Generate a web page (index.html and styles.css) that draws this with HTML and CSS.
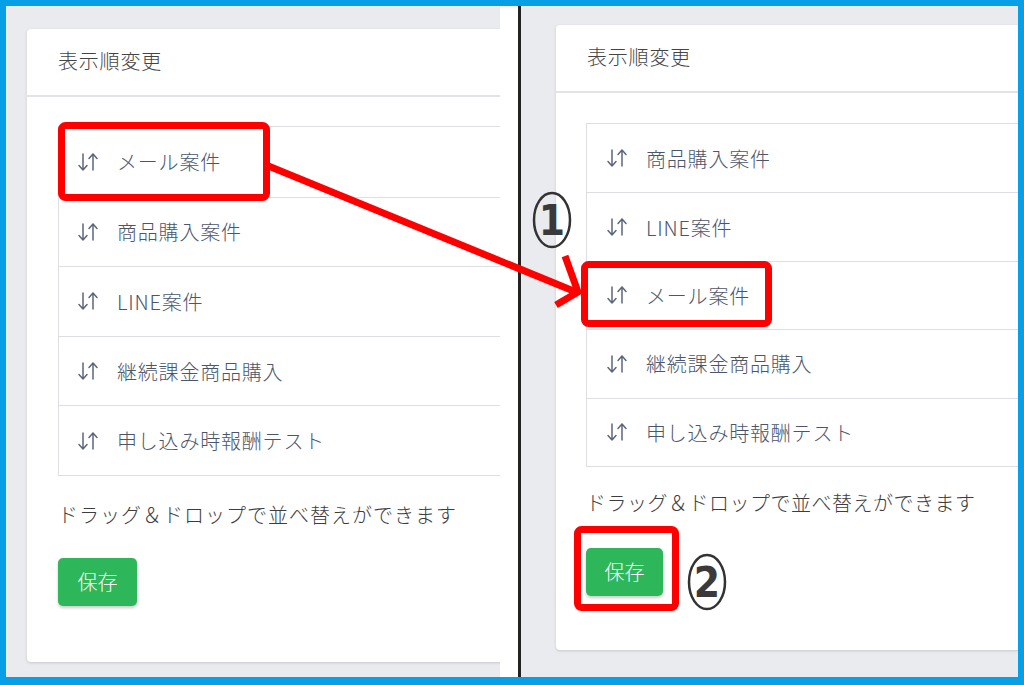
FILE: index.html
```html
<!DOCTYPE html>
<html lang="ja">
<head>
    <meta charset="UTF-8">
    <meta name="viewport" content="width=device-width, initial-scale=1.0">
    <title>表示順変更</title>
    <link rel="stylesheet" href="styles.css">
</head>
<body>
    <div class="page">
        <div class="frame">
            <div class="shot shot-left">
                <div class="card">
                    <div class="card-header">表示順変更</div>
                    <div class="card-body">
                        <ul class="sort-list">
                            <li><span class="sort-icon"></span>メール案件</li>
                            <li><span class="sort-icon"></span>商品購入案件</li>
                            <li><span class="sort-icon"></span>LINE案件</li>
                            <li><span class="sort-icon"></span>継続課金商品購入</li>
                            <li><span class="sort-icon"></span>申し込み時報酬テスト</li>
                        </ul>
                        <p class="hint">ドラッグ＆ドロップで並べ替えができます</p>
                        <button class="btn-save">保存</button>
                    </div>
                </div>
            </div>
            <div class="gap"></div>
            <div class="divider"></div>
            <div class="shot shot-right">
                <div class="card">
                    <div class="card-header">表示順変更</div>
                    <div class="card-body">
                        <ul class="sort-list">
                            <li><span class="sort-icon"></span>商品購入案件</li>
                            <li><span class="sort-icon"></span>LINE案件</li>
                            <li><span class="sort-icon"></span>メール案件</li>
                            <li><span class="sort-icon"></span>継続課金商品購入</li>
                            <li><span class="sort-icon"></span>申し込み時報酬テスト</li>
                        </ul>
                        <p class="hint">ドラッグ＆ドロップで並べ替えができます</p>
                        <button class="btn-save">保存</button>
                    </div>
                </div>
            </div>
        </div>

        <!-- 注釈（赤枠・矢印・番号） -->
        <svg class="annot" width="1024" height="685" viewBox="0 0 1024 685">
            <g fill="none" stroke="#ff0000" stroke-width="7">
                <rect x="61.5" y="125.5" width="205" height="72" rx="4"/>
                <rect x="584.5" y="264.5" width="184" height="59" rx="4"/>
                <rect x="577.5" y="529.5" width="98" height="78" rx="4"/>
                <line x1="266" y1="165" x2="576" y2="292"/>
                <polyline points="565,256 578,292 556,305"/>
            </g>
            <g class="num">
                <ellipse cx="552" cy="220" rx="18" ry="27"/>
                <text x="552" y="235">1</text>
                <ellipse cx="707" cy="582" rx="18" ry="27"/>
                <text x="707" y="597">2</text>
            </g>
        </svg>
    </div>

    <script>
        // 並べ替えアイコン（↓↑）を各行に入れる
        const iconSvg = '<svg width="22" height="20" viewBox="0 0 22 20" fill="none" stroke="currentColor" stroke-width="1.5" stroke-linecap="round" stroke-linejoin="round">' +
            '<path d="M6 2v16M2 13.5l4 4.5 4-4.5"/>' +
            '<path d="M16 18V2M12 6.5l4-4.5 4 4.5"/></svg>';
        document.querySelectorAll('.sort-icon').forEach((el) => {
            el.innerHTML = iconSvg;
        });
    </script>
</body>
</html>
```

FILE: styles.css
```css
body {
    margin: 0;
    font-family: "Noto Sans CJK JP", "Noto Sans", sans-serif;
    font-weight: 300;
    background-color: #fff;
}
.page {
    position: relative;
    width: 1024px;
    height: 685px;
    overflow: hidden;
}
.frame {
    box-sizing: border-box;
    width: 1024px;
    height: 685px;
    border-style: solid;
    border-color: #079fe6;
    border-width: 6px 6px 8px 6px;
    display: flex;
    background: #fff;
}
.shot {
    background-color: #e9ebee;
    overflow: hidden;
    flex-shrink: 0;
}
.shot-left {
    width: 494px;
    padding: 23px 0 0 21px;
    box-sizing: border-box;
}
.shot-right {
    width: 497px;
    padding: 19px 0 0 35px;
    box-sizing: border-box;
}
.gap {
    width: 18px;
    flex-shrink: 0;
}
.divider {
    width: 3px;
    background: #222;
    flex-shrink: 0;
}
.card {
    width: 640px;
    height: 633px;
    background: #fff;
    border-radius: 4px;
    box-shadow: 0 1px 3px rgba(0, 0, 0, 0.15);
    box-sizing: border-box;
}
.shot-right .card {
    height: 625px;
}
.card-header {
    height: 68px;
    box-sizing: border-box;
    padding: 17px 0 0 31px;
    font-size: 20px;
    line-height: 30px;
    letter-spacing: 0.8px;
    color: #444;
    border-bottom: 2px solid #e1e3e8;
}
.card-body {
    padding: 29px 0 0 31px;
}
.shot-right .card-body {
    padding: 30px 0 0 30px;
}
.sort-list {
    list-style: none;
    margin: 0;
    padding: 0;
    border: 1px solid #dcdee3;
    border-right: none;
}
.sort-list li {
    height: 69.6px;
    box-sizing: border-box;
    display: flex;
    align-items: center;
    padding-left: 18px;
    font-size: 20px;
    letter-spacing: 0.8px;
    color: #4b566a;
    border-top: 1px solid #dcdee3;
}
.sort-list li:first-child {
    border-top: none;
}
.shot-right .sort-list li {
    height: 68.4px;
    padding-left: 19px;
}
.sort-icon {
    display: inline-flex;
    width: 22px;
    height: 20px;
    margin-right: 18px;
    color: #5c6679;
}
.hint {
    margin: 25px 0 0;
    font-size: 20px;
    line-height: 28px;
    letter-spacing: 1px;
    color: #3d3d3d;
}
.shot-right .hint {
    margin-top: 22px;
    letter-spacing: 0.5px;
}
.btn-save {
    margin-top: 29px;
    width: 79px;
    height: 48px;
    border: none;
    border-radius: 5px;
    background-color: #2eb65b;
    color: #fff;
    font-family: inherit;
    font-weight: 300;
    font-size: 20px;
    box-shadow: 0 2px 3px rgba(0, 0, 0, 0.2);
    cursor: pointer;
}
.shot-right .btn-save {
    margin-top: 31px;
    width: 77px;
}
.annot {
    position: absolute;
    top: 0;
    left: 0;
    pointer-events: none;
}
.num ellipse {
    fill: none;
    stroke: #333;
    stroke-width: 2.5;
}
.num text {
    font-family: "DejaVu Sans Condensed", "DejaVu Sans", sans-serif;
    font-weight: bold;
    font-size: 42px;
    fill: #3a3a3a;
    text-anchor: middle;
}
```
